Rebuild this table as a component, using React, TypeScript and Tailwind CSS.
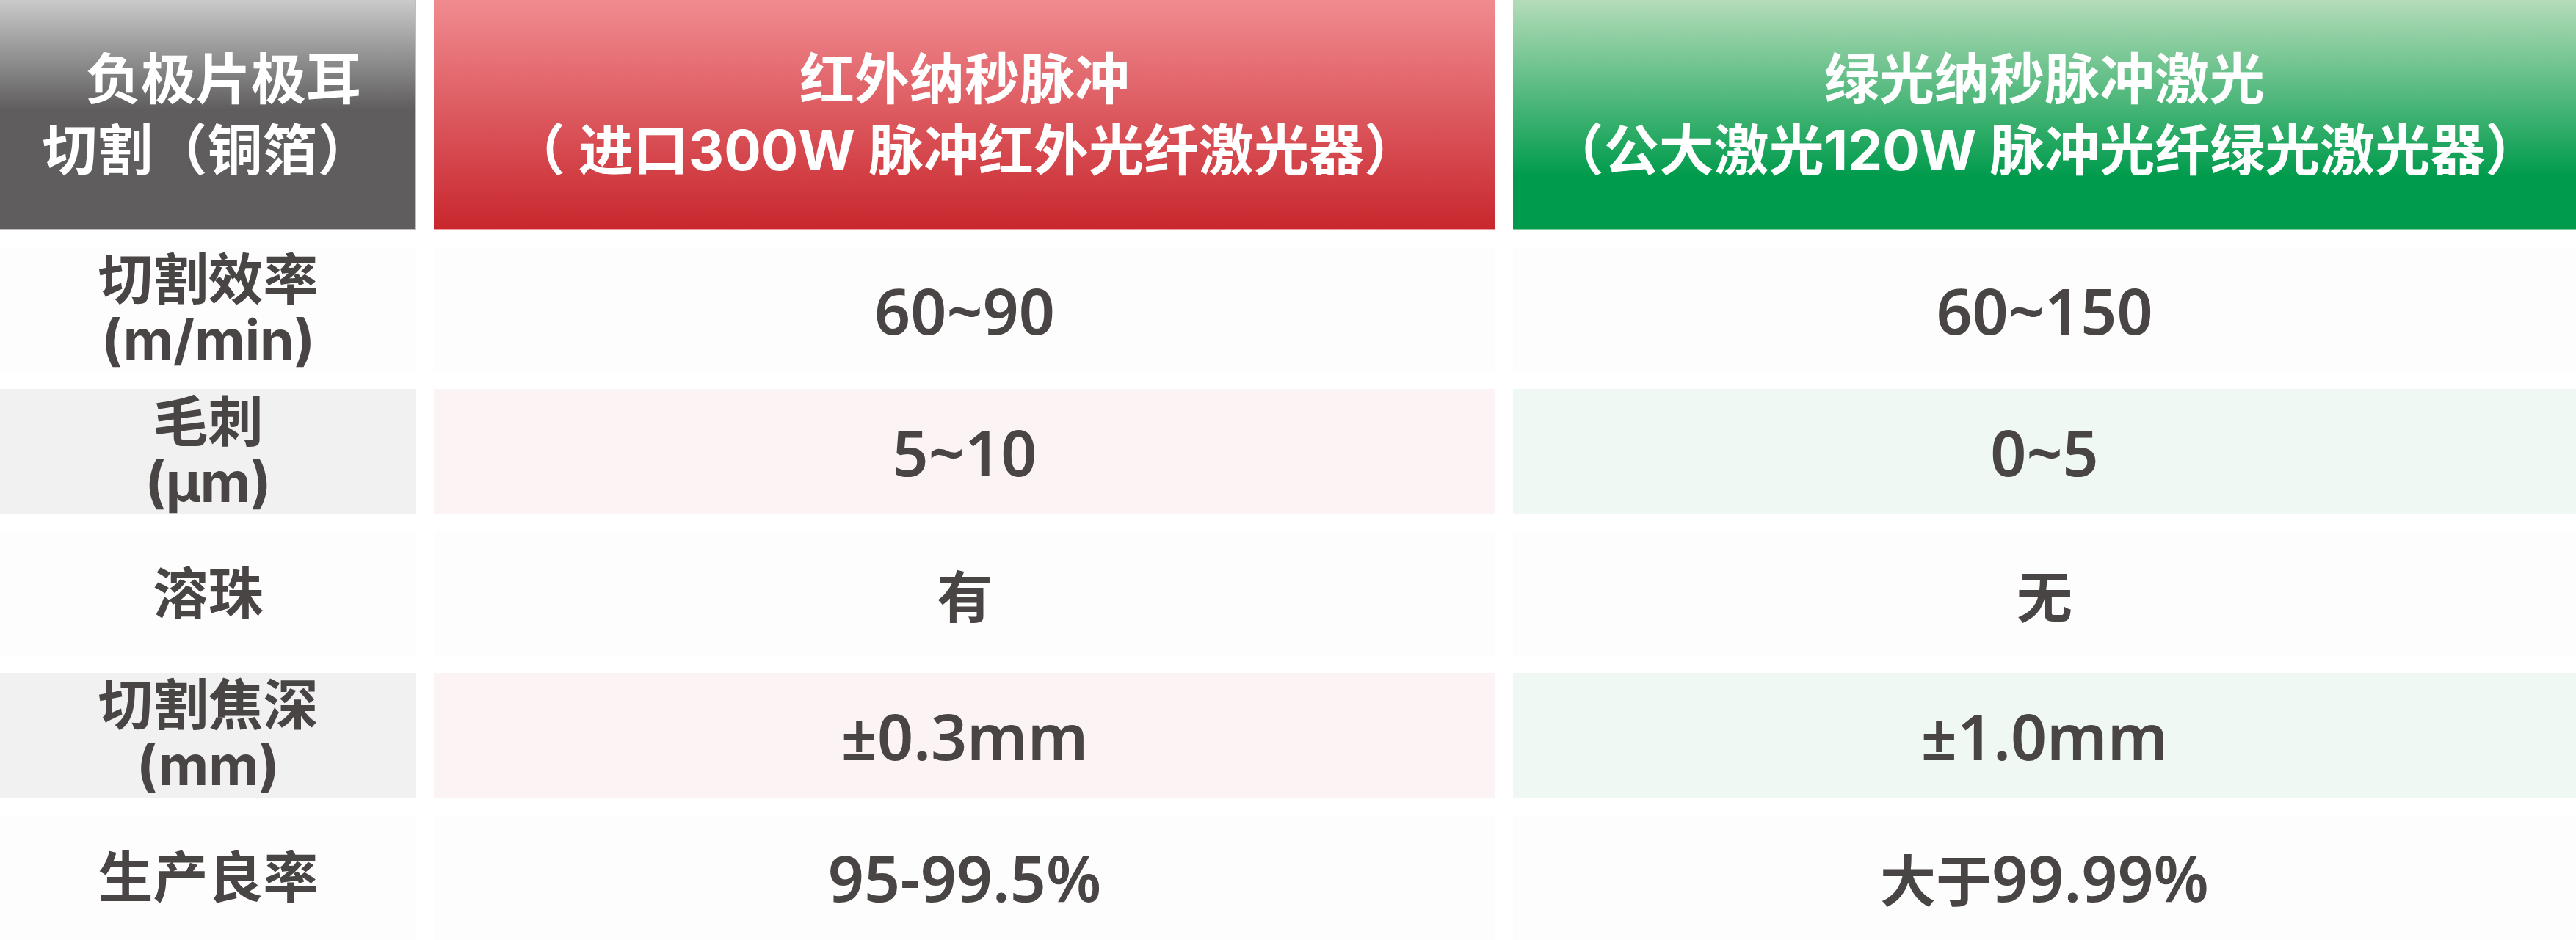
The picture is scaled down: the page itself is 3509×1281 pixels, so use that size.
// 负极片极耳切割（铜箔）激光器对比表
const rows = [
  { label: ["切割效率", "(m/min)"], red: "60~90", green: "60~150", striped: false },
  { label: ["毛刺", "(µm)"], red: "5~10", green: "0~5", striped: true },
  { label: ["溶珠"], red: "有", green: "无", striped: false },
  { label: ["切割焦深", "(mm)"], red: "±0.3mm", green: "±1.0mm", striped: true },
  { label: ["生产良率"], red: "95-99.5%", green: "大于99.99%", striped: false },
];

function HeaderCell({ lines, className }: { lines: string[]; className: string }) {
  return (
    <div
      className={`flex flex-col items-center justify-center text-white font-bold text-[75px] leading-[97px] ${className}`}
    >
      {lines.map((l, i) => (
        <span key={l} className={`whitespace-pre ${i === 0 && lines[0].length === 5 ? "pl-[44px]" : ""}`}>
          {l}
        </span>
      ))}
    </div>
  );
}

// 中文用思源黑体，数字用较大的拉丁字体
function Value({ text }: { text: string }) {
  const parts = text.match(/[\u4e00-\u9fff]+|[^\u4e00-\u9fff]+/g) ?? [];
  return (
    <span className="flex items-baseline">
      {parts.map((p, i) =>
        /[\u4e00-\u9fff]/.test(p) ? (
          <span key={i} className="font-['Noto_Sans_CJK_SC',sans-serif] font-bold text-[76px]">
            {p}
          </span>
        ) : (
          <span key={i} className="font-['Noto_Sans','Noto_Sans_CJK_SC',sans-serif] font-semibold text-[86px]">
            {p}
          </span>
        ),
      )}
    </span>
  );
}

export default function App() {
  return (
    <div className="w-[3509px] h-[1281px] bg-white overflow-hidden font-['Inter','Noto_Sans_CJK_SC',sans-serif] text-[#484544]">
      <div className="grid grid-cols-[567px_1446px_1448px] grid-rows-[314px_repeat(5,170.4px)] gap-x-[24px] gap-y-[23px]">
        {/* 表头 */}
        <HeaderCell
          lines={["负极片极耳", "切割（铜箔）"]}
          className="bg-[linear-gradient(180deg,#cacaca_0%,#5f5d5e_48%,#5f5d5e_100%)] border-b-2 border-r-2 border-[#bdbdbd]"
        />
        <HeaderCell
          lines={["红外纳秒脉冲", "（ 进口300W 脉冲红外光纤激光器）"]}
          className="bg-[linear-gradient(180deg,#f08b90_0%,#c8272d_100%)] border-b-2 border-[#f19a9c]"
        />
        <HeaderCell
          lines={["绿光纳秒脉冲激光", "（公大激光120W 脉冲光纤绿光激光器）"]}
          className="bg-[linear-gradient(180deg,#b4dcb8_0%,#009b4c_77%,#009b4c_100%)] border-b-2 border-[#7fcb9a]"
        />

        {/* 数据行 */}
        {rows.map((r) => (
          <div key={r.label[0]} className="contents">
            <div
              className={`flex flex-col items-center justify-center font-bold text-[75px] leading-[82px] ${
                r.striped ? "bg-[#f1f1f1]" : "bg-[#fdfdfd]"
              }`}
            >
              {r.label.map((l) => (
                <span key={l}>{l}</span>
              ))}
            </div>
            <div
              className={`flex items-center justify-center ${
                r.striped ? "bg-[#fcf3f4]" : "bg-[#fdfdfd]"
              }`}
            >
              <Value text={r.red} />
            </div>
            <div
              className={`flex items-center justify-center ${
                r.striped ? "bg-[#f0f8f3]" : "bg-[#fdfdfd]"
              }`}
            >
              <Value text={r.green} />
            </div>
          </div>
        ))}
      </div>
    </div>
  );
}
